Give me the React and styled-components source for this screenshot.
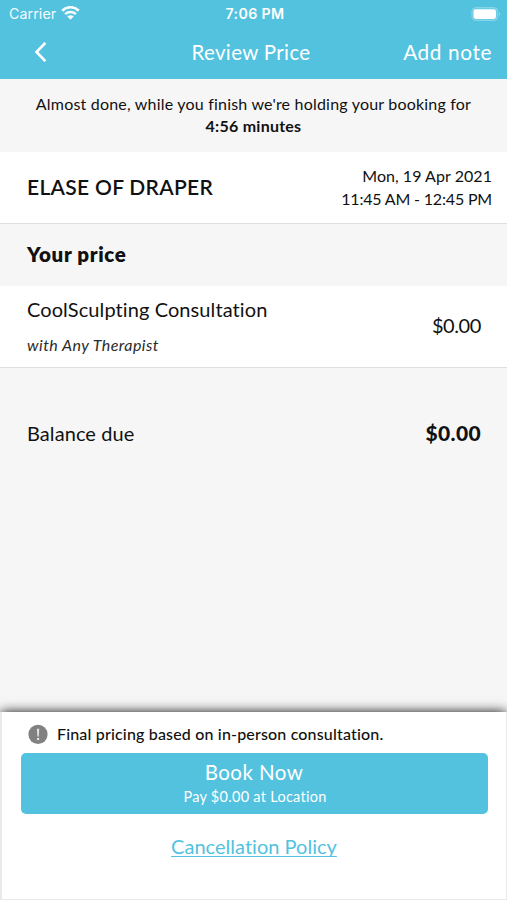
import React from "react";
import styled, { createGlobalStyle } from "styled-components";

const Global = createGlobalStyle`
  *, *::before, *::after { box-sizing: border-box; }
  html, body { margin: 0; padding: 0; background: #f6f6f6; }
  button { font: inherit; border: 0; padding: 0; background: none; color: inherit; }
  p, h1, h2 { margin: 0; }
`;

const Screen = styled.div`
  display: flex;
  flex-direction: column;
  width: 507px;
  height: 900px;
  overflow: hidden;
  background: #f6f6f6;
  color: #111;
  font-family: Lato, "Noto Sans", sans-serif;
`;

const Text = styled.span`
  display: block;
  white-space: nowrap;
  font-size: ${(p) => p.$size}px;
  line-height: ${(p) => p.$line || 24}px;
  font-weight: ${(p) => p.$weight || 400};
  letter-spacing: ${(p) => p.$track || 0}px;
  font-style: ${(p) => (p.$italic ? "italic" : "normal")};
`;

const Header = styled.header`
  height: 79px;
  background: #52c2df;
  color: #fff;
`;

const StatusBar = styled.div`
  display: grid;
  grid-template-columns: 1fr auto 1fr;
  align-items: center;
  height: 27px;
  padding: 0 6px 0 9px;
  font-family: Inter, sans-serif;
`;

const Carrier = styled.div`
  display: flex;
  align-items: center;
  gap: 5px;
  opacity: 0.95;
`;

const Battery = styled.svg`
  justify-self: end;
`;

const NavBar = styled.nav`
  display: grid;
  grid-template-columns: 1fr auto 1fr;
  align-items: center;
  height: 50px;
  padding: 0 15px 0 10px;
`;

const BackButton = styled.button`
  display: flex;
  width: 40px;
  padding-left: 23px;
`;

const NavAction = styled.button`
  justify-self: end;
`;

const HoldNotice = styled.div`
  display: flex;
  flex-direction: column;
  align-items: center;
  height: 73px;
  padding-top: 14px;
`;

const Row = styled.section`
  display: flex;
  align-items: center;
  justify-content: space-between;
  height: ${(p) => p.$height}px;
  padding: 0 ${(p) => p.$right || 26}px ${(p) => p.$lift || 0}px 27px;
  background: ${(p) => (p.$plain ? "transparent" : "#fff")};
  border-bottom: ${(p) => (p.$plain ? "0" : "1px solid #dedede")};
`;

const Schedule = styled.div`
  display: flex;
  flex-direction: column;
  align-items: flex-end;
`;

const Service = styled.div`
  display: flex;
  flex-direction: column;
  gap: 12px;
  padding-top: 3px;
`;

const Therapist = styled(Text)`
  color: #2b2b2b;
`;

const Spacer = styled.div`
  height: ${(p) => p.$height}px;
  flex: none;
`;

const Footer = styled.footer`
  display: flex;
  flex-direction: column;
  align-items: center;
  height: 188px;
  margin: auto 0 0;
  padding: 12px 18px 0 18px;
  background: #fff;
  border: 1px solid #e9e9e9;
  border-top: 0;
  border-left-width: 2px;
  box-shadow: 0 -1px 11px -1px rgba(0, 0, 0, 0.95);
  clip-path: inset(-20px 0 0 0);
`;

const PricingNote = styled.div`
  display: flex;
  align-items: center;
  align-self: stretch;
  gap: 9px;
  height: 22px;
  padding: 0 0 2px 8px;
`;

const BookButton = styled.button`
  display: flex;
  flex-direction: column;
  align-items: center;
  width: 467px;
  height: 61px;
  margin-top: 7px;
  padding-top: 7px;
  border-radius: 5px;
  background: #52c2df;
  color: #fff;
`;

const PayLine = styled(Text)`
  padding: 1px 0 0 2px;
`;

const PolicyLink = styled.a`
  margin-top: 20px;
  color: #52c2df;
  text-decoration: underline;
  text-decoration-thickness: 1px;
  text-underline-offset: 2px;
  text-decoration-skip-ink: none;
`;

const WifiIcon = () => (
  <svg width="19" height="15" viewBox="0 0 19 15" fill="none" stroke="#fff">
    <path d="M1.2 4.7C5.8.1 13.2.1 17.8 4.7" strokeWidth="2.7" />
    <path d="M4.1 8.1C7.1 5.3 11.9 5.3 14.9 8.1" strokeWidth="2.5" />
    <path d="M6.2 10.5C8.1 8.7 10.9 8.7 12.8 10.5L9.5 13.8Z" fill="#fff" stroke="none" />
  </svg>
);

const BatteryIcon = () => (
  <Battery width="30" height="14" viewBox="0 0 30 14">
    <rect x="0.8" y="0.5" width="26" height="13" rx="4" fill="#fff" fillOpacity="0.15" stroke="#fff" strokeOpacity="0.25" />
    <rect x="2.5" y="2.3" width="22.5" height="9.6" rx="2.3" fill="#fff" />
    <path d="M28.2 5.2C29.6 5.8 29.6 8.2 28.2 8.8Z" fill="#fff" fillOpacity="0.45" />
  </Battery>
);

const ChevronIcon = () => (
  <svg width="16" height="20" viewBox="0 0 16 20" fill="none" stroke="#fff" strokeWidth="2.6">
    <path d="M12.4 0.8L3.5 10L12.4 19.2" />
  </svg>
);

const AlertIcon = () => (
  <svg width="20" height="20" viewBox="0 0 20 20">
    <circle cx="10" cy="10.4" r="9.6" fill="#818181" />
    <path d="M8.9 4.8h2.4l-.5 7.6H9.4z" fill="#e4e4e4" />
    <circle cx="10.1" cy="15" r="1.2" fill="#e4e4e4" />
  </svg>
);

export default function App() {
  return (
    <>
      <Global />
      <Screen>
        <Header>
          <StatusBar>
            <Carrier>
              <Text $size={14.2} $track={0.1}>Carrier</Text>
              <WifiIcon />
            </Carrier>
            <Text $size={14.2} $weight={600} $track={0.35}>7:06 PM</Text>
            <BatteryIcon />
          </StatusBar>
          <NavBar>
            <BackButton aria-label="Back">
              <ChevronIcon />
            </BackButton>
            <Text as="h1" $size={20.5} $track={0.35}>Review Price</Text>
            <NavAction>
              <Text $size={20.8} $track={0.6}>Add note</Text>
            </NavAction>
          </NavBar>
        </Header>

        <HoldNotice>
          <Text $size={16} $line={22} $track={0.2}>
            Almost done, while you finish we're holding your booking for
          </Text>
          <Text $size={16} $line={22} $weight={700} $track={0.25}>4:56 minutes</Text>
        </HoldNotice>

        <Row $height={72} $right={15} $lift={2}>
          <Text as="h2" $size={21} $weight={600} $track={0.3}>ELASE OF DRAPER</Text>
          <Schedule>
            <Text $size={16} $line={23} $track={0.05}>Mon, 19 Apr 2021</Text>
            <Text $size={16} $line={23} $track={-0.18}>11:45 AM - 12:45 PM</Text>
          </Schedule>
        </Row>

        <Row $height={62} $lift={2} $plain>
          <Text as="h2" $size={20.5} $weight={800} $track={0.65}>Your price</Text>
        </Row>

        <Row $height={82} $lift={3}>
          <Service>
            <Text $size={20} $track={0.09}>CoolSculpting Consultation</Text>
            <Therapist $size={16} $italic $track={0.45}>with Any Therapist</Therapist>
          </Service>
          <Text $size={20} $track={-0.4}>$0.00</Text>
        </Row>

        <Spacer $height={36} />
        <Row $height={62} $lift={4} $plain>
          <Text $size={20} $track={0.07}>Balance due</Text>
          <Text $size={21} $weight={900} $track={0.35}>$0.00</Text>
        </Row>

        <Footer>
          <PricingNote>
            <AlertIcon />
            <Text $size={16} $weight={500} $track={0.17}>Final pricing based on in-person consultation.</Text>
          </PricingNote>
          <BookButton>
            <Text $size={20.5} $track={0.45}>Book Now</Text>
            <PayLine $size={14.5} $track={0.28}>Pay $0.00 at Location</PayLine>
          </BookButton>
          <PolicyLink>
            <Text $size={20} $track={0.02}>Cancellation Policy</Text>
          </PolicyLink>
        </Footer>
      </Screen>
    </>
  );
}
